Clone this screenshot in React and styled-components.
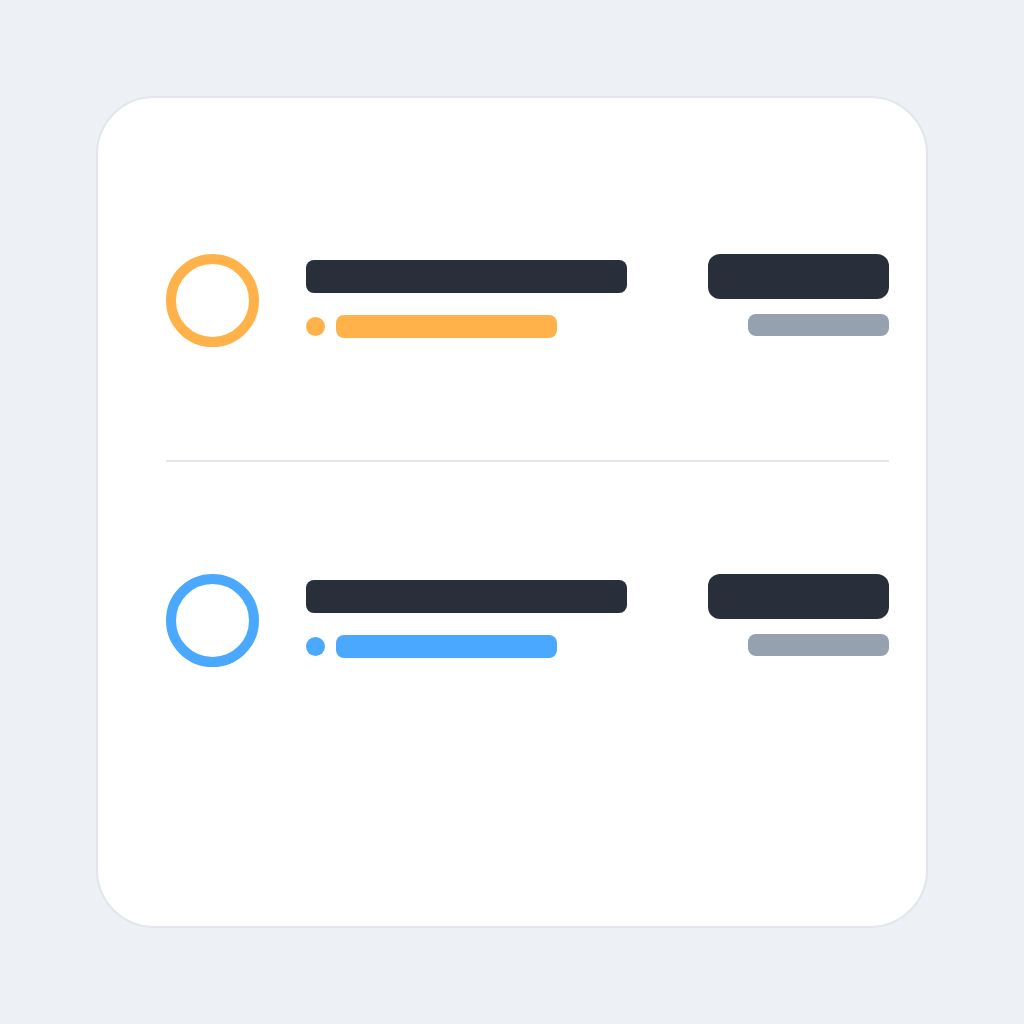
import React from 'react';
import styled, { createGlobalStyle } from 'styled-components';

const GlobalStyle = createGlobalStyle`
  html, body {
    margin: 0;
    padding: 0;
    background: #edf0f5;
    font-family: "Inter", "Liberation Sans", sans-serif;
  }
  * { box-sizing: border-box; }
`;

const Page = styled.div`
  width: 1024px;
  height: 1024px;
  display: flex;
  align-items: center;
  justify-content: center;
`;

const Card = styled.div`
  width: 832px;
  height: 832px;
  background: #ffffff;
  border: 2px solid #e2e5ec;
  border-radius: 58px;
  padding: 43px 37px 0 68px;
  display: flex;
  flex-direction: column;
`;

const Row = styled.div`
  height: 318px;
  display: flex;
  align-items: center;
`;

const Divider = styled.div`
  height: 2px;
  margin: 1px 0 -1px;
  background: #e3e6eb;
`;

const Ring = styled.div`
  width: 93px;
  height: 93px;
  flex-shrink: 0;
  border-radius: 50%;
  border: 10px solid ${p => p.$color};
`;

const Info = styled.div`
  display: flex;
  flex-direction: column;
  gap: 22px;
  margin-left: 47px;
  padding-bottom: 2px;
`;

const Title = styled.div`
  width: 321px;
  height: 33px;
  border-radius: 8px;
  background: #282f3b;
`;

const Meta = styled.div`
  display: flex;
  align-items: center;
  gap: 11px;
`;

const Dot = styled.span`
  width: 19px;
  height: 19px;
  border-radius: 50%;
  background: ${p => p.$color};
`;

const Tag = styled.span`
  width: 221px;
  height: 23px;
  border-radius: 8px;
  background: ${p => p.$color};
`;

const Side = styled.div`
  margin-left: auto;
  display: flex;
  flex-direction: column;
  align-items: flex-end;
  gap: 15px;
  padding-bottom: 11px;
`;

const Amount = styled.div`
  width: 181px;
  height: 45px;
  border-radius: 12px;
  background: #282f3b;
`;

const Sub = styled.div`
  width: 141px;
  height: 22px;
  border-radius: 8px;
  background: #95a1af;
`;

const items = [
  { id: 1, color: '#ffb24a' },
  { id: 2, color: '#4ba8ff' },
];

const Item = ({ color }) => (
  <Row>
    <Ring $color={color} />
    <Info>
      <Title />
      <Meta>
        <Dot $color={color} />
        <Tag $color={color} />
      </Meta>
    </Info>
    <Side>
      <Amount />
      <Sub />
    </Side>
  </Row>
);

export default function App() {
  return (
    <Page>
      <GlobalStyle />
      <Card>
        {items.map((item, i) => (
          <React.Fragment key={item.id}>
            {i > 0 && <Divider />}
            <Item color={item.color} />
          </React.Fragment>
        ))}
      </Card>
    </Page>
  );
}
